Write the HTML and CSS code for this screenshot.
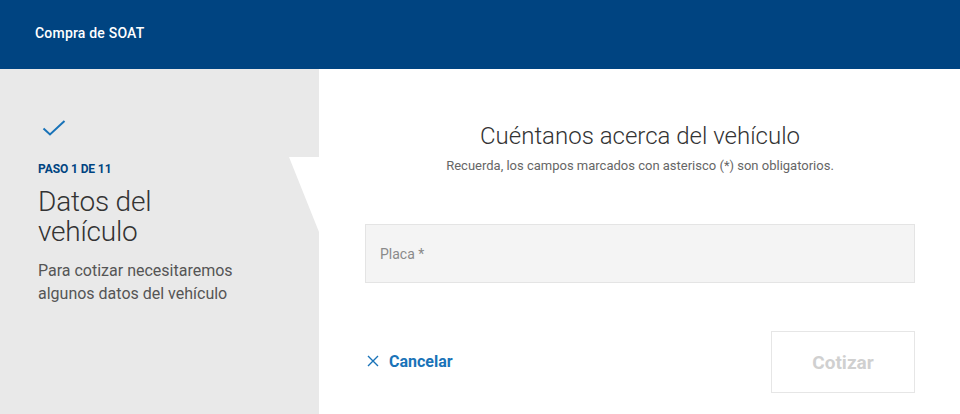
FILE: index.html
```html
<!DOCTYPE html>
<html lang="es">
<head>
<meta charset="utf-8">
<title>Compra de SOAT</title>
<link rel="stylesheet" href="styles.css">
</head>
<body>
<header class="topbar">
  <span class="topbar-title">Compra de SOAT</span>
</header>
<main class="layout">
  <aside class="steps">
    <svg class="check" width="24" height="16" viewBox="0 0 24 16" aria-hidden="true">
      <path d="M1.5 8.5 L8 14.5 L22.5 1" fill="none" stroke="#1973b8" stroke-width="2"/>
    </svg>
    <div class="step-label">PASO 1 DE 11</div>
    <h1 class="step-title">Datos del<br>vehículo</h1>
    <p class="step-desc">Para cotizar necesitaremos<br>algunos datos del vehículo</p>
    <span class="notch"></span>
  </aside>
  <section class="form">
    <h2 class="form-title">Cuéntanos acerca del vehículo</h2>
    <p class="form-sub">Recuerda, los campos marcados con asterisco (*) son obligatorios.</p>
    <div class="field">
      <span class="placeholder">Placa *</span>
    </div>
    <div class="actions">
      <a class="cancel" href="#">
        <svg width="12" height="12" viewBox="0 0 12 12" aria-hidden="true">
          <path d="M1 1 L11 11 M11 1 L1 11" stroke="#1973b8" stroke-width="1.4" fill="none"/>
        </svg>
        <span>Cancelar</span>
      </a>
      <button class="submit" type="button">Cotizar</button>
    </div>
  </section>
</main>
</body>
</html>
```
FILE: styles.css
```css
html, body {
  margin: 0;
  padding: 0;
  background: #ffffff;
  font-family: Roboto, "Liberation Sans", sans-serif;
}

.topbar {
  height: 69px;
  background: #004481;
  display: flex;
  align-items: center;
  padding-left: 35px;
  box-sizing: border-box;
}

.topbar-title {
  color: #ffffff;
  font-size: 14px;
  font-weight: 500;
  letter-spacing: 0.2px;
  margin-top: -3px;
}

.layout {
  display: flex;
  height: 345px;
}

.steps {
  position: relative;
  width: 319px;
  flex: none;
  background: #e9e9e9;
  padding: 51px 0 0 38px;
  box-sizing: border-box;
}

.check {
  display: block;
  margin-left: 4px;
}

.step-label {
  margin-top: 26px;
  font-size: 12px;
  font-weight: 700;
  color: #004481;
  letter-spacing: -0.1px;
}

.step-title {
  margin: 11px 0 0;
  font-size: 28px;
  font-weight: 300;
  line-height: 30px;
  color: #333333;
  letter-spacing: -0.2px;
}

.step-desc {
  margin: 12px 0 0;
  font-size: 16px;
  line-height: 23px;
  color: #555555;
  font-weight: 400;
}

.notch {
  position: absolute;
  top: 88px;
  right: 0;
  width: 30px;
  height: 75px;
  background: #ffffff;
  clip-path: polygon(0 0, 100% 0, 100% 100%);
}

.form {
  flex: 1;
  padding: 52px 45px 0 46px;
  display: flex;
  flex-direction: column;
}

.form-title {
  margin: 0;
  text-align: center;
  font-size: 24px;
  font-weight: 300;
  color: #333333;
  line-height: 30px;
}

.form-sub {
  margin: 7px 0 0;
  text-align: center;
  font-size: 13px;
  color: #666666;
  line-height: 16px;
}

.field {
  margin-top: 50px;
  height: 59px;
  background: #f4f4f4;
  border: 1px solid #e4e4e4;
  box-sizing: border-box;
  display: flex;
  align-items: center;
  padding-left: 14px;
}

.placeholder {
  font-size: 14px;
  color: #8a8a8a;
}

.actions {
  margin-top: 48px;
  display: flex;
  align-items: center;
  justify-content: space-between;
}

.cancel {
  display: flex;
  align-items: center;
  gap: 10px;
  text-decoration: none;
  color: #1973b8;
  font-size: 16px;
  font-weight: 700;
  margin-left: 2px;
  margin-top: -2px;
}

.submit {
  width: 144px;
  height: 62px;
  background: #ffffff;
  border: 1px solid #e6e6e6;
  font-family: Roboto, "Liberation Sans", sans-serif;
  font-size: 19px;
  font-weight: 700;
  color: #d0d0d0;
  padding: 0;
}
```
